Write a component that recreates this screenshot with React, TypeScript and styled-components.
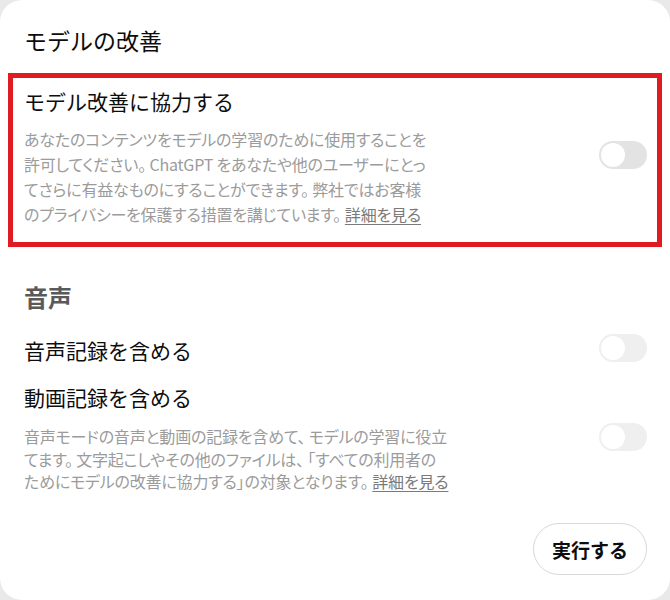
import React from 'react';
import styled, { createGlobalStyle } from 'styled-components';

const GlobalStyle = createGlobalStyle`
  html, body {
    margin: 0;
    padding: 0;
    background: #e9e9e9;
  }
  body {
    font-family: "Noto Sans CJK JP", "Noto Sans", sans-serif;
    color: #0d0d0d;
  }
`;

const Panel = styled.div`
  box-sizing: border-box;
  width: 670px;
  height: 600px;
  padding: 24px 23px 25px 24px;
  background: #ffffff;
  border-radius: 22px;
  display: flex;
  flex-direction: column;
`;

const Heading = styled.h2`
  margin: 0 0 17px;
  font-size: 23px;
  line-height: 32px;
  font-weight: 400;
  color: #0d0d0d;
`;

const HighlightBox = styled.div`
  margin: 0 -15px 0 -16px;
  padding: 9px 10px 15px 11px;
  border: 5px solid #e11b22;
`;

const SectionTitle = styled.h3`
  margin: 34px 0 0;
  font-size: 24px;
  line-height: 32px;
  font-weight: 700;
  color: #5a5a5a;
`;

const Row = styled.div<{ $align?: 'center' | 'flex-start'; $gap?: number }>`
  display: flex;
  justify-content: space-between;
  align-items: ${({ $align }) => $align || 'flex-start'};
  margin-top: ${({ $gap }) => `${$gap || 0}px`};
`;

const TextBlock = styled.div`
  display: flex;
  flex-direction: column;
`;

const ItemTitle = styled.div`
  font-size: 21px;
  line-height: 28px;
  color: #0d0d0d;
`;

const Description = styled.p<{ $lineHeight: number; $gap: number }>`
  margin: ${({ $gap }) => `${$gap}px`} 0 0;
  font-size: 16px;
  line-height: ${({ $lineHeight }) => `${$lineHeight}px`};
  letter-spacing: -0.2px;
  color: #9b9b9b;
  white-space: nowrap;
  font-feature-settings: 'palt';
`;

const MoreLink = styled.a`
  margin-left: 4px;
  color: #7a7a7a;
  text-decoration: underline;
  text-underline-offset: 3px;
  cursor: pointer;
`;

const Track = styled.span<{ $muted?: boolean; $offset?: number }>`
  flex: none;
  box-sizing: border-box;
  width: 48px;
  height: 28px;
  padding: 2px;
  margin-top: ${({ $offset }) => `${$offset || 0}px`};
  border-radius: 14px;
  background: ${({ $muted }) => ($muted ? '#efefef' : '#e3e3e3')};
  display: flex;
  align-items: center;
`;

const Knob = styled.span`
  width: 24px;
  height: 24px;
  border-radius: 50%;
  background: #ffffff;
`;

const Footer = styled.div`
  margin-top: auto;
  display: flex;
  justify-content: flex-end;
`;

const RunButton = styled.button`
  box-sizing: border-box;
  width: 114px;
  height: 52px;
  border: 1px solid #d9d9d9;
  border-radius: 26px;
  background: #ffffff;
  font-family: inherit;
  font-size: 19px;
  font-weight: 700;
  color: #0d0d0d;
  cursor: pointer;
`;

function Toggle({ muted, offset }: { muted?: boolean; offset?: number }) {
  return (
    <Track $muted={muted} $offset={offset} role="switch" aria-checked="false">
      <Knob />
    </Track>
  );
}

function Lines({ lines }: { lines: string[] }) {
  return (
    <>
      {lines.map((line, i) => (
        <React.Fragment key={i}>
          {line}
          {i < lines.length - 1 && <br />}
        </React.Fragment>
      ))}
    </>
  );
}

export default function App() {
  return (
    <>
      <GlobalStyle />
      <Panel>
        <Heading>モデルの改善</Heading>

        <HighlightBox>
          <Row>
            <TextBlock>
              <ItemTitle>モデル改善に協力する</ItemTitle>
              <Description $lineHeight={25} $gap={12}>
                <Lines
                  lines={[
                    'あなたのコンテンツをモデルの学習のために使用することを',
                    '許可してください。 ChatGPT をあなたや他のユーザーにとっ',
                    'てさらに有益なものにすることができます。 弊社ではお客様',
                    'のプライバシーを保護する措置を講じています。',
                  ]}
                />
                <MoreLink>詳細を見る</MoreLink>
              </Description>
            </TextBlock>
            <Toggle offset={54} />
          </Row>
        </HighlightBox>

        <SectionTitle>音声</SectionTitle>

        <Row $align="center" $gap={23}>
          <ItemTitle>音声記録を含める</ItemTitle>
          <Toggle muted offset={-4} />
        </Row>

        <Row $gap={19}>
          <TextBlock>
            <ItemTitle>動画記録を含める</ItemTitle>
            <Description $lineHeight={22.5} $gap={14}>
              <Lines
                lines={[
                  '音声モードの音声と動画の記録を含めて、 モデルの学習に役立',
                  'てます。 文字起こしやその他のファイルは、 「すべての利用者の',
                  'ためにモデルの改善に協力する」の対象となります。',
                ]}
              />
              <MoreLink>詳細を見る</MoreLink>
            </Description>
          </TextBlock>
          <Toggle muted offset={40} />
        </Row>

        <Footer>
          <RunButton>実行する</RunButton>
        </Footer>
      </Panel>
    </>
  );
}
